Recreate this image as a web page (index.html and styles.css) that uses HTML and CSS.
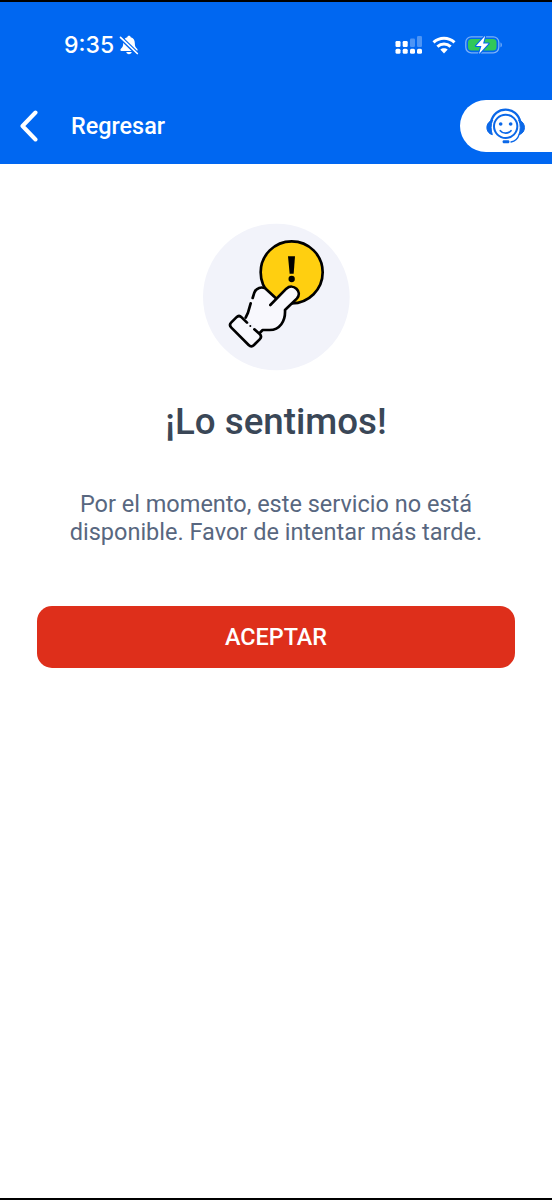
FILE: index.html
```html
<!DOCTYPE html>
<html lang="es">
<head>
    <meta charset="UTF-8">
    <meta name="viewport" content="width=device-width, initial-scale=1.0">
    <title>Servicio no disponible</title>
    <link rel="stylesheet" href="styles.css">
</head>
<body>
    <div class="screen">
        <header class="header">
            <div class="status-bar">
                <div class="clock">
                    <span class="time">9:35</span>
                    <svg class="bell" width="20" height="20" viewBox="0 0 20 20">
                        <path d="M10 .8c-.9 0-1.600.6-1.700 1.400C5.600 3 4.200 5.100 4.200 8c0 3.400-.9 4.400-2.300 5.800-.9.900-.6 2.200.6 2.200h15c1.200 0 1.500-1.300.6-2.200-1.400-1.400-2.300-2.400-2.300-5.800 0-2.900-1.400-5-4.100-5.800C11.600 1.400 10.900.8 10 .8zM7.300 17c.2 1.300 1.300 2.200 2.700 2.200s2.500-.9 2.700-2.200z" fill="#fff"/>
                        <path d="M1.500 2.500l16.500 16" stroke="#0067f1" stroke-width="4"/>
                        <path d="M1.500 2.300l16.800 16.200" stroke="#fff" stroke-width="1.700" stroke-linecap="round"/>
                    </svg>
                </div>
                <div class="indicators">
                    <svg width="28" height="18" viewBox="0 0 28 18" fill="#fff">
                        <rect x="0.500" y="5" width="5" height="6" rx="1.200"/>
                        <rect x="7.700" y="5" width="5" height="6" rx="1.200"/>
                        <rect x="15" y="2.500" width="5" height="8.500" rx="1.200" opacity=".3"/>
                        <rect x="22" y="0" width="5" height="11" rx="1.200" opacity=".3"/>
                        <rect x="0.500" y="12.800" width="5" height="5" rx="1.500"/>
                        <rect x="7.700" y="12.800" width="5" height="5" rx="1.500"/>
                        <rect x="15" y="12.800" width="5" height="5" rx="1.500"/>
                        <rect x="22" y="12.800" width="5" height="5" rx="1.500"/>
                    </svg>
                    <svg width="24" height="18" viewBox="0 0 24 18" fill="none" stroke="#fff" stroke-width="3">
                        <path d="M1.500 6.300c6-5.500 15-5.500 21 0"/>
                        <path d="M5.400 10.600c3.800-3.500 9.400-3.500 13.200 0"/>
                        <path d="M12 17.500l-3.700-3.900c2-1.900 5.400-1.900 7.400 0z" fill="#fff" stroke="none"/>
                    </svg>
                    <svg width="38" height="20" viewBox="0 0 38 20">
                        <rect x="0.800" y="1.800" width="33" height="16" rx="5.500" fill="none" stroke="#7ab0f8" stroke-width="1.300"/>
                        <path d="M35.500 7.500c1.800.6 1.800 4.200 0 4.800z" fill="#7ab0f8"/>
                        <rect x="3" y="4" width="28.500" height="11.600" rx="3.500" fill="#32c759"/>
                        <path d="M20.200 .7L11 10.900h5.400L14 19 23.600 8.600h-5.500z" fill="#fff" stroke="#0067f1" stroke-width="2" paint-order="stroke" stroke-linejoin="round"/>
                    </svg>
                </div>
            </div>
            <nav class="nav">
                <a class="back" href="#">
                    <svg width="20" height="32" viewBox="0 0 20 32" fill="none" stroke="#fff" stroke-width="4" stroke-linecap="round" stroke-linejoin="round">
                        <path d="M16.500 2.500L3.500 16l13 13.500"/>
                    </svg>
                    <span>Regresar</span>
                </a>
                <a class="support" href="#" aria-label="Ayuda">
                    <svg width="40" height="38" viewBox="0 0 120 114" fill="none" stroke="#0b68e8" stroke-linecap="round">
                        <circle cx="59" cy="55" r="35" stroke-width="6"/>
                        <path d="M15 42C20 18 38 5 59 5s39 13 44 37" stroke-width="7"/>
                        <path d="M19 37C-3 42-3 75 19 80c-5-14-5-29 0-43zM99 37c22 5 22 38 0 43 5-14 5-29 0-43z" fill="#0b68e8" stroke-width="3"/>
                        <path d="M100 78c-4 13-13 22-25 24" stroke-width="4"/>
                        <rect x="50" y="97" width="20" height="9" rx="3" fill="#0b68e8" stroke="none"/>
                        <path d="M43 68c8 10 24 10 32 0" stroke-width="5"/>
                        <circle cx="44" cy="48" r="5.500" fill="#0b68e8" stroke="none"/>
                        <circle cx="74" cy="48" r="5.500" fill="#0b68e8" stroke="none"/>
                    </svg>
                </a>
            </nav>
        </header>
        <main class="content">
            <!-- mano presionando el aviso -->
            <svg class="illustration" width="148" height="148" viewBox="21 22 444 444">
                <circle cx="244" cy="244" r="220" fill="#f2f3fa"/>
                <g stroke="#000" stroke-width="8" stroke-linecap="round" stroke-linejoin="round">
                    <circle cx="290" cy="170" r="93" fill="#ffcf10"/>
                    <path d="M173 247l9-22c6-11 24-14 35-5l26 27 29-29c20-19 49 8 33 30l-33 35c1 34-17 59-47 59h-22l-8 9-44-49 8-16 9-38z" fill="#f8f8fd" stroke="none"/>
                    <path d="M173 247l5-16c5-15 22-19 34-12M212 219l30 28" fill="none"/>
                    <path d="M226 268l48-49c21-18 49 9 32 29l-36 35c2 34-16 60-46 60h-21l-9 9M167 263l-8 28-7 15" fill="none"/>
                    <path d="M156 321l-16-16c-5-5-11-5-16 0l-15 15c-5 5-5 11 0 16l52 52c5 5 11 5 16 0l17-17c5-5 5-11 0-16l-16-14z" fill="#f8f8fd" stroke="none"/>
                    <path d="M156 321l-16-16c-5-5-11-5-16 0l-15 15c-5 5-5 11 0 16l52 52c5 5 11 5 16 0l17-17c5-5 5-11 0-16l-16-14" fill="none"/>
                </g>
                <circle cx="166" cy="331" r="3"/>
                <path d="M279 122h21l-4 52h-12z"/>
                <circle cx="290" cy="190" r="9.500"/>
            </svg>
            <h1 class="title">¡Lo sentimos!</h1>
            <p class="message">Por el momento, este servicio no está<br>disponible. Favor de intentar más tarde.</p>
            <button class="accept">ACEPTAR</button>
        </main>
    </div>
</body>
</html>
```
FILE: styles.css
```css
html, body {
    height: 100%;
    margin: 0;
    padding: 0;
    font-family: Roboto, "Liberation Sans", sans-serif;
    background-color: #fff;
}
.screen {
    height: 1200px;
    box-sizing: border-box;
    border-top: 2px solid #000;
    border-bottom: 2px solid #000;
    display: flex;
    flex-direction: column;
    overflow: hidden;
}
.header {
    height: 162px;
    background-color: #0067f1;
    color: #fff;
}
.status-bar {
    height: 86px;
    display: flex;
    justify-content: space-between;
    align-items: center;
    padding: 0 48px 0 64px;
    box-sizing: border-box;
}
.clock, .indicators {
    display: flex;
    align-items: center;
}
.clock {
    gap: 5px;
}
.time {
    font-family: Inter, "Liberation Sans", sans-serif;
    font-size: 23px;
    font-weight: 500;
}
.indicators {
    gap: 9px;
    margin-right: 1px;
}
.nav {
    display: flex;
    justify-content: space-between;
    align-items: center;
    margin-top: 12px;
    padding-left: 19px;
}
.back {
    display: flex;
    align-items: center;
    gap: 32px;
    color: #fff;
    font-size: 23.4px;
    font-weight: 500;
    text-decoration: none;
}
.support {
    width: 92px;
    height: 52px;
    box-sizing: border-box;
    padding: 8px 0 0 26px;
    background-color: #fff;
    border-radius: 26px 0 0 26px;
}
.support svg {
    display: block;
}
.content {
    display: flex;
    flex-direction: column;
    align-items: center;
    padding: 59px 37px 0;
}
.title {
    margin: 29px 0 0;
    color: #3a4757;
    font-size: 36.7px;
    font-weight: 500;
    line-height: 44px;
}
.message {
    margin: 47px 0 0;
    color: #586780;
    font-size: 23.5px;
    line-height: 27.5px;
    text-align: center;
    white-space: nowrap;
}
.accept {
    width: 100%;
    height: 62px;
    margin-top: 60px;
    border: none;
    border-radius: 15px;
    background-color: #de2f1b;
    color: #fff;
    font-family: inherit;
    font-size: 23.4px;
    font-weight: 500;
}
```
